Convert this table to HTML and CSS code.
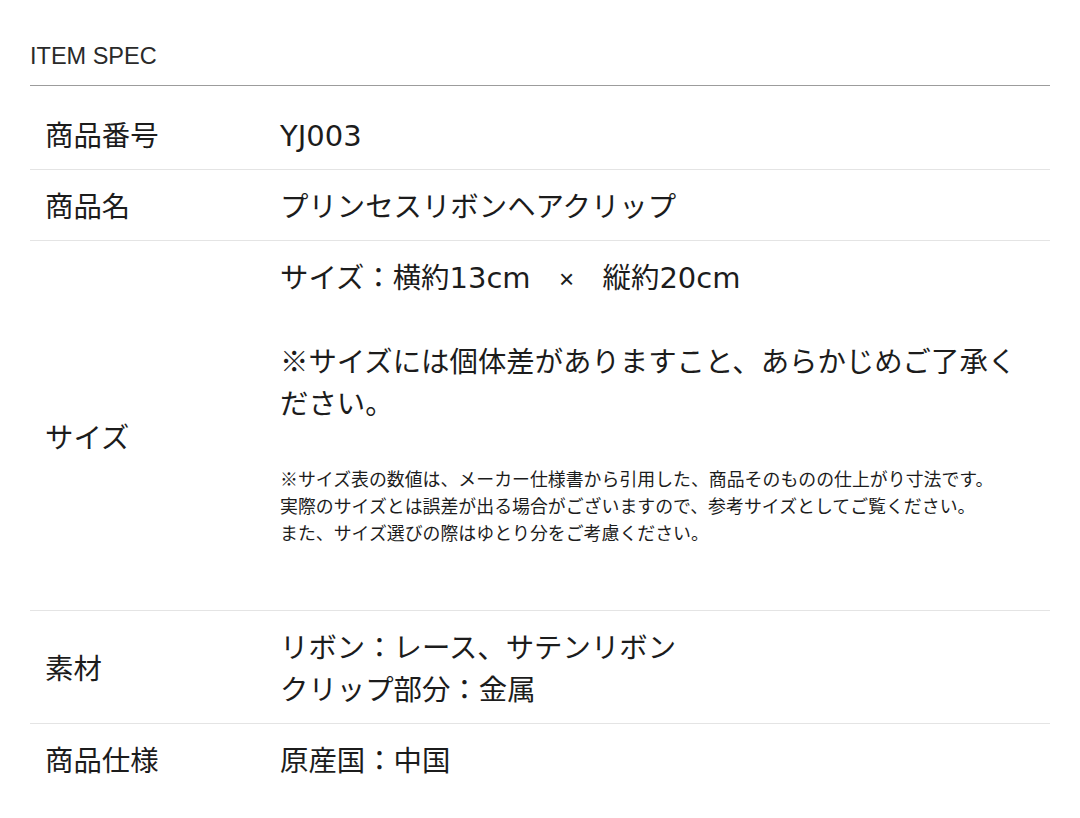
FILE: index.html
```html
<!DOCTYPE html>
<html lang="ja">
<head>
<meta charset="utf-8">
<title>ITEM SPEC</title>
<link rel="stylesheet" href="styles.css">
</head>
<body>
<section class="spec">
  <h2 class="spec-title">ITEM SPEC</h2>
  <table class="spec-table">
    <tr>
      <th>商品番号</th>
      <td><span class="en">YJ003</span></td>
    </tr>
    <tr>
      <th>商品名</th>
      <td>プリンセスリボンヘアクリップ</td>
    </tr>
    <tr>
      <th class="th-size">サイズ</th>
      <td class="td-size">
        <p class="big">サイズ：横約<span class="en">13cm</span>　<span class="en times">×</span>　縦約<span class="en">20cm</span><br><br>※サイズには個体差がありますこと、あらかじめご了承ください。</p>
        <p class="note">※サイズ表の数値は、メーカー仕様書から引用した、商品そのものの仕上がり寸法です。<br>実際のサイズとは誤差が出る場合がございますので、参考サイズとしてご覧ください。<br>また、サイズ選びの際はゆとり分をご考慮ください。</p>
      </td>
    </tr>
    <tr>
      <th>素材</th>
      <td>リボン：レース、サテンリボン<br>クリップ部分：金属</td>
    </tr>
    <tr class="last">
      <th>商品仕様</th>
      <td>原産国：中国</td>
    </tr>
  </table>
</section>
</body>
</html>
```

FILE: styles.css
```css
html, body {
  margin: 0;
  padding: 0;
  background: #ffffff;
}

body {
  font-family: "Noto Sans CJK JP", sans-serif;
  color: #1c1c1c;
}

.spec {
  padding: 39px 30px 0 30px;
}

.spec-title {
  margin: 0;
  font-family: "Liberation Sans", Arial, sans-serif;
  font-weight: normal;
  font-size: 23.5px;
  line-height: 34px;
  color: #2a2a2a;
  padding-bottom: 12px;
  border-bottom: 1px solid #9c9c9c;
}

.spec-table {
  width: 100%;
  border-collapse: collapse;
  margin-top: 13px;
  font-size: 28.4px;
  line-height: 42px;
}

.spec-table th,
.spec-table td {
  padding: 14px 0;
  text-align: left;
  font-weight: normal;
  vertical-align: middle;
  border-bottom: 1px solid #e4e4e4;
}

.spec-table th {
  width: 235px;
  padding-left: 15px;
}

.spec-table td {
  padding-right: 22px;
}

.spec-table .last th,
.spec-table .last td {
  border-bottom: none;
}

.en {
  font-family: "DejaVu Sans", "Liberation Sans", sans-serif;
  font-weight: normal;
  font-size: 29px;
  line-height: 1;
}

.times {
  font-family: "Liberation Sans", sans-serif;
  font-size: 26px;
}

.th-size {
  padding-top: 34px !important;
}

.td-size {
  padding-bottom: 64px !important;
}

.big {
  margin: 0 0 42px 0;
}

.note {
  margin: 0;
  font-size: 17.9px;
  line-height: 27px;
}
```
